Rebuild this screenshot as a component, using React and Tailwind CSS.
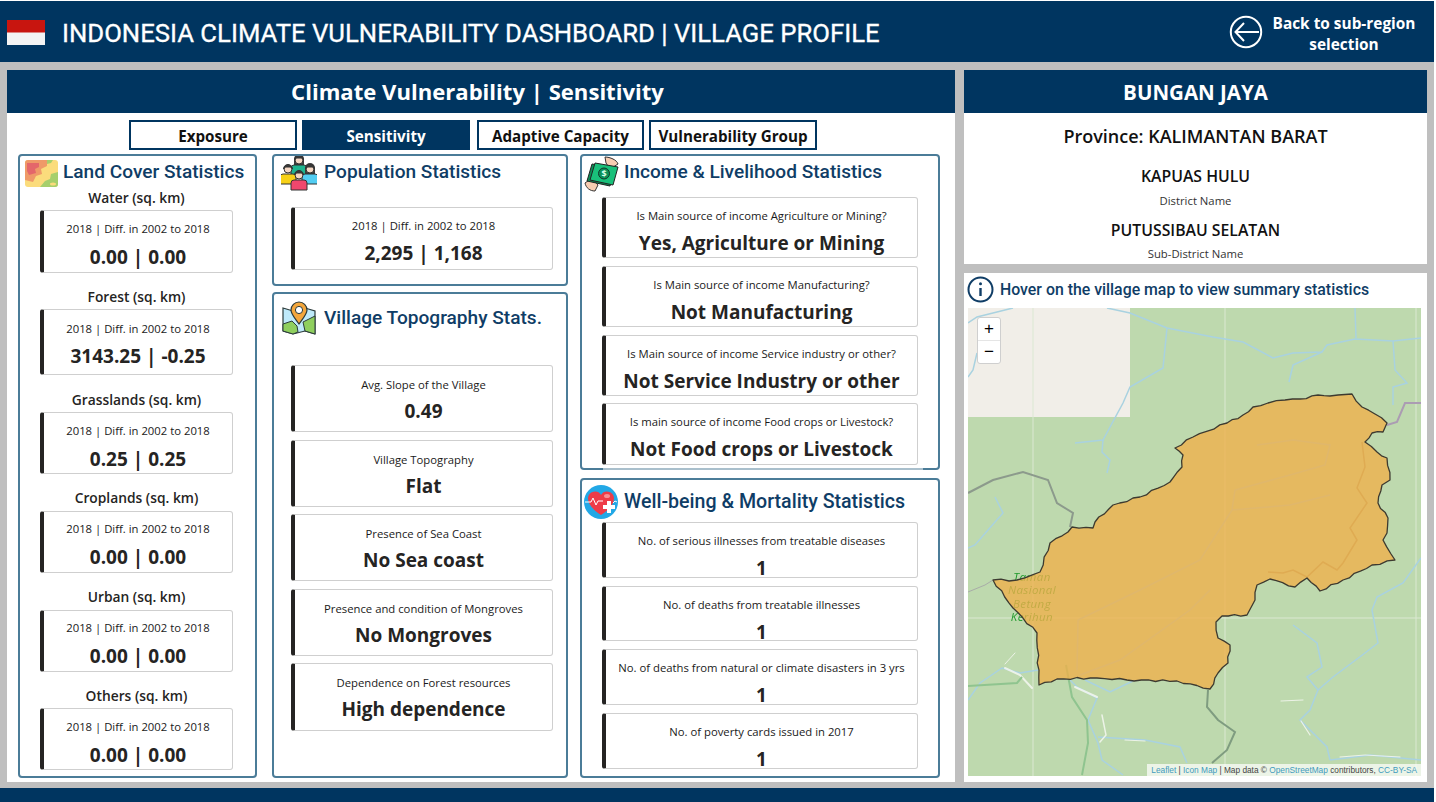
import React from "react";

const sans = "font-['Open_Sans','Noto_Sans',sans-serif]";
const din = "font-['Roboto','Noto_Sans',sans-serif]";

function Card({ h, label, value, mt = "", vsize = "text-[19px]", pt = "pt-[9px]", gap = "mt-[7px]" }) {
  return (
    <div className={`${mt} ${h} ${pt} shrink-0 rounded-[3px] border border-[#cfcfcf] border-l-[4px] border-l-[#252423] bg-white text-center`}>
      <div className="text-[11.3px] leading-[18px] text-[#1a1a1a] whitespace-nowrap">{label}</div>
      <div className={`${gap} ${vsize} font-bold leading-[26px] text-[#252423] whitespace-nowrap`}>{value}</div>
    </div>
  );
}

function Panel({ className = "", children }) {
  return <div className={`relative rounded-[4px] border-2 border-[#4b7c98] bg-white ${className}`}>{children}</div>;
}

function Heading({ icon, children, className = "", up = "", size = "text-[19.1px]" }) {
  return (
    <div className={`flex items-center ${className}`}>
      {icon}
      <span className={`${din} ${up} ${size} font-medium leading-[28px] text-[#0f3d66] whitespace-nowrap`}>{children}</span>
    </div>
  );
}

const LandIcon = () => (
  <svg width="33" height="27" viewBox="0 0 33 27" className="shrink-0">
    <rect width="33" height="27" rx="3" fill="#fbdc7c" />
    <path d="M0 3a3 3 0 0 1 3-3h19v6l-6 3 1 5-6 2-3 6-8-2z" fill="#ef9a68" />
    <path d="M2 3h12v4l-4 2 1 4-7 2-2-4z" fill="#e4676a" />
    <path d="M33 12v12a3 3 0 0 1-3 3H15l5-6 5-2 1-5z" fill="#a6cf6c" />
    <path d="M22 0h6l-2 3-4 1z" fill="#a6cf6c" />
    <ellipse cx="28" cy="24" rx="3" ry="1.5" fill="#fbdc7c" />
  </svg>
);

const Person = ({ x, y, c, long }) => (
  <g transform={`translate(${x} ${y})`}>
    {long && <path d="M-5 12V3a5 5 0 0 1 10 0v9z" fill="#3b3b3b" />}
    <path d="M-8 19v-7a3 3 0 0 1 3-3h10a3 3 0 0 1 3 3v7z" fill={c} stroke="#333" strokeWidth="1" />
    <circle cx="0" cy="4" r="4" fill="#f6d8c4" stroke="#333" strokeWidth="1" />
    <path d="M-4.5 4a4.5 4.5 0 0 1 9 0l-2-2h-5z" fill="#3b3b3b" stroke="#333" strokeWidth="1" />
  </g>
);

const PeopleIcon = () => (
  <svg width="36" height="36" viewBox="0 0 36 36" className="shrink-0">
    <Person x={18} y={0} c="#1fb58f" long />
    <Person x={7} y={9} c="#f7d117" />
    <Person x={29} y={9} c="#52cdf2" long />
    <Person x={18} y={15} c="#f0476d" />
  </svg>
);

const MapPinIcon = () => (
  <svg width="36" height="36" viewBox="0 0 36 36" className="shrink-0">
    <path d="M2 8l10 3 12-3 10 3v23l-10-3-12 3-10-3z" fill="#bfeafa" stroke="#2b3a3a" strokeWidth="1.2" />
    <path d="M2 24l9-3 5 5 1 6-5 2-10-3zM22 22l12-6v18l-10-3z" fill="#8fcf5e" stroke="#2b3a3a" strokeWidth="1" />
    <path d="M18 24c-5-7-8-10-8-14a8 8 0 0 1 16 0c0 4-3 7-8 14z" fill="#f4a63b" stroke="#2b3a3a" strokeWidth="1.2" />
    <circle cx="18" cy="10" r="3.6" fill="#fff" stroke="#2b3a3a" />
  </svg>
);

const MoneyIcon = () => (
  <svg width="36" height="36" viewBox="0 0 36 36" className="shrink-0">
    <path d="M21 1c5 0 12 3 13 7l-8 5-4-6zM1 27l7-5 6 7-3 6c-5 0-9-3-10-8z" fill="#f8cdb2" stroke="#333" />
    <path d="M8 8l23 4-5 18-23-5z" fill="#0a8f57" stroke="#222" />
    <path d="M11 7l23 4-5 18-23-5z" fill="#19c07a" stroke="#222" />
    <circle cx="20" cy="17.5" r="5.5" fill="#0a8f57" stroke="#13382a" />
    <text x="20" y="21" textAnchor="middle" fontSize="9" fontWeight="700" fill="#d7ffe8" fontFamily="Open Sans">$</text>
  </svg>
);

const HeartIcon = () => (
  <svg width="34" height="34" viewBox="0 0 34 34" className="shrink-0">
    <circle cx="17" cy="17" r="17" fill="#22a8e6" />
    <path d="M17 30C8 24 4 19 4 13a7 7 0 0 1 13-3 7 7 0 0 1 13 3c0 6-4 11-13 17z" fill="#ee3c48" />
    <ellipse cx="23" cy="11" rx="3" ry="2" fill="#f98f94" />
    <path d="M1 17h6l2-4 3 7 2-4h5" fill="none" stroke="#fff" strokeWidth="1" />
    <path d="M29 18l2-2 2 1" fill="none" stroke="#fff" strokeWidth="1" />
    <path d="M19 20h4v-4h4v4h4v4h-4v4h-4v-4h-4z" fill="#fff" />
  </svg>
);

function Tab({ w, active, children, mr }) {
  return (
    <div className={`${w} ${mr} flex h-[30px] items-center justify-center border-2 border-[#003560] pt-[2px] text-[15.2px] font-bold ${active ? "bg-[#003560] text-white" : "bg-white text-[#111]"}`}>
      {children}
    </div>
  );
}

const land = [
  ["Water (sq. km)", "0.00 | 0.00", "h-[63px]", "mt-0", "h-[22px]", "pt-[9px]", "mt-[6px]"],
  ["Forest (sq. km)", "3143.25 | -0.25", "h-[66px]", "mt-[14px]", "h-[22px]", "pt-[10px]", "mt-[5px]"],
  ["Grasslands (sq. km)", "0.25 | 0.25", "h-[62px]", "mt-[15px]", "h-[22px]", "pt-[9px]", "mt-[6px]"],
  ["Croplands (sq. km)", "0.00 | 0.00", "h-[62px]", "mt-[14px]", "h-[23px]", "pt-[8px]", "mt-[6px]"],
  ["Urban (sq. km)", "0.00 | 0.00", "h-[62px]", "mt-[14px]", "h-[23px]", "pt-[8px]", "mt-[6px]"],
  ["Others (sq. km)", "0.00 | 0.00", "h-[62px]", "mt-[14px]", "h-[22px]", "pt-[9px]", "mt-[6px]"],
];

const topo = [
  ["Avg. Slope of the Village", "0.49", "h-[67px]", "mt-0"],
  ["Village Topography", "Flat", "h-[67px]", "mt-[8px]"],
  ["Presence of Sea Coast", "No Sea coast", "h-[67px]", "mt-[7px]"],
  ["Presence and condition of Mongroves", "No Mongroves", "h-[67px]", "mt-[8px]"],
  ["Dependence on Forest resources", "High dependence", "h-[68px]", "mt-[7px]"],
];

const income = [
  ["Is Main source of income Agriculture or Mining?", "Yes, Agriculture or Mining", "h-[61px]", "mt-0"],
  ["Is Main source of income Manufacturing?", "Not Manufacturing", "h-[61px]", "mt-[8px]"],
  ["Is Main source of income Service industry or other?", "Not Service Industry or other", "h-[61px]", "mt-[8px]"],
  ["Is main source of income Food crops or Livestock?", "Not Food crops or Livestock", "h-[62px]", "mt-[7px]"],
];

const well = [
  ["No. of serious illnesses from treatable diseases", "h-[56px]", "mt-0"],
  ["No. of deaths from treatable illnesses", "h-[55px]", "mt-[8px]"],
  ["No. of deaths from natural or climate disasters in 3 yrs", "h-[56px]", "mt-[8px]"],
  ["No. of poverty cards issued in 2017", "h-[56px]", "mt-[8px]"],
];

const polyBase = [
  [1253,407],[1268,403],[1285,400],[1300,399],[1318,395],[1330,396],[1338,395],[1352,394],[1362,407],[1375,414],[1387,423],[1383,432],[1372,433],[1365,442],[1377,452],[1387,458],[1390,480],[1382,485],[1378,503],[1388,518],[1387,533],[1383,540],[1395,560],[1372,565],[1343,580],[1320,591],[1307,578],[1295,587],[1270,579],[1257,585],[1255,600],[1247,615],[1222,616],[1216,622],[1218,638],[1230,645],[1228,663],[1218,673],[1210,689],[1177,681],[1127,680],[1097,678],[1057,679],[1039,685],[1037,633],[1013,608],[993,580],[1017,580],[1040,572],[1050,543],[1068,532],[1072,527],[1093,528],[1095,522],[1113,505],[1140,497],[1170,482],[1182,467],[1183,455],[1175,448],[1193,437],[1227,423],[1243,415],
];

// a slightly rough outline, as a traced boundary has
function roughen(pts) {
  const out = [];
  pts.forEach((p, i) => {
    const q = pts[(i + 1) % pts.length];
    const dx = q[0] - p[0];
    const dy = q[1] - p[1];
    const len = Math.hypot(dx, dy);
    const n = Math.max(1, Math.round(len / 7));
    out.push(p.join(","));
    for (let k = 1; k < n; k++) {
      const off = Math.sin(k * 2.4 + i * 1.7) * 1;
      const x = p[0] + (dx * k) / n - (dy / len) * off;
      const y = p[1] + (dy * k) / n + (dx / len) * off;
      out.push(`${x.toFixed(1)},${y.toFixed(1)}`);
    }
  });
  return out.join(" ");
}
const poly = roughen(polyBase);

function MapArt() {
  const river = "fill-none stroke-[#a9d2e0] stroke-[1.5]";
  return (
    <svg viewBox="968 308 453 468" className="absolute inset-0 h-full w-full blur-[0.35px]">
      <rect x="968" y="308" width="453" height="468" fill="#bed9ae" />
      <rect x="968" y="308" width="162" height="109" fill="#f1eee8" />
      <g stroke="#dbe8d2" strokeWidth="1">
        <path d="M1033 308V776M1225 308V776M1416 308V776M968 618H1421" />
      </g>
      <g className={river}>
        <polyline points="1107,308 1130,313 1167,328 1213,337 1243,342 1273,358 1293,353 1322,352 1327,345 1355,339 1393,341 1421,338" />
        <polyline points="1167,328 1165,348 1163,368 1130,387 1123,403 1103,440 1075,443" />
        <polyline points="1103,440 1102,452 1110,460 1107,473" />
        <polyline points="1355,308 1356,338" />
        <polyline points="1393,341 1395,370 1407,383 1393,387 1393,405" />
        <polyline points="1322,352 1293,365 1289,382" />
        <polyline points="968,323 977,317 997,312 1013,308" />
        <polyline points="977,353 973,370 968,377" />
        <polyline points="995,497 1003,513 988,530 975,545 968,548" />
        <polyline points="1293,625 1317,643 1322,667 1307,677 1318,690 1310,710 1300,720 1327,747 1330,760" />
        <polyline points="1318,690 1333,677 1365,653 1378,643 1372,610 1377,597 1403,583 1421,558" />
        <polyline points="1070,680 1077,687 1097,698 1088,720 1098,743 1102,760 1123,775" />
        <polyline points="1098,737 1145,740 1180,747 1187,763" />
        <polyline points="968,700 980,683 1002,668 1020,673 1038,670" />
        <polyline points="1330,760 1370,755 1421,760" />
        <polyline points="1085,680 1110,692 1135,680" />
        <polyline points="1257,445 1293,440 1330,445 1325,465 1290,475 1235,490 1232,510 1290,505 1330,495" />
        <polyline points="1232,510 1200,560 1140,590 1078,620 1077,670" />
        <polyline points="1210,590 1190,610 1120,660 1080,675" />
      </g>
      <g fill="none" stroke="#f4f7f1" strokeLinecap="round" strokeOpacity="0.85">
        <polyline points="1005,668 1020,675 1032,688" strokeWidth="2" />
        <polyline points="1075,687 1097,697" strokeWidth="2" />
        <polyline points="1015,653 1005,664" strokeWidth="1" />
        <polyline points="1102,715 1106,735 1100,742" strokeWidth="1.5" />
        <polyline points="1125,740 1145,741" strokeWidth="1.2" />
        <polyline points="1281,701 1303,700" strokeWidth="1" />
        <polyline points="1301,721 1310,735" strokeWidth="1.2" />
        <polyline points="1340,757 1365,755 1400,757" strokeWidth="1" />
      </g>
      <g fill="none" strokeWidth="2">
        <polyline points="968,493 993,480 1023,472 1048,480 1057,503 1073,513 1070,527" stroke="#8c9a8c" />
        <polyline points="1387,425 1397,422 1405,403 1421,403" stroke="#ab9cb3" />
        <polyline points="1208,690 1207,707 1218,720 1235,732 1227,750 1212,763" stroke="#7f9c80" />
        <polyline points="968,686 1017,683 1022,677" stroke="#8fc48f" />
        <polyline points="1066,665 1072,697 1087,720 1088,743 1082,775" stroke="#8fc48f" />
        <polyline points="968,592 985,585 993,580" stroke="#a8aca8" strokeWidth="1" />
        <polyline points="1362,442 1365,467 1357,488 1367,503 1350,528 1357,540 1343,563 1337,570 1323,562 1307,577 1293,570 1283,573 1268,572" stroke="#a39a6d" strokeWidth="1.5" />
      </g>
      <g fontFamily="Open Sans" fontStyle="italic" fontSize="11.5" fill="#1f9a2c" textAnchor="middle" letterSpacing="0.4">
        <text x="1032" y="581">Taman</text>
        <text x="1032" y="594">Nasional</text>
        <text x="1032" y="608">Betung</text>
        <text x="1032" y="621">Kerihun</text>
      </g>
      <polygon points={poly} fill="#f0b04a" fillOpacity="0.78" stroke="#3d3a30" strokeWidth="1.3" strokeLinejoin="round" />
    </svg>
  );
}

export default function App() {
  return (
    <div className={`h-[802px] w-[1436px] overflow-hidden bg-white pt-px ${sans}`}>
      <div className="flex h-[801px] w-[1434px] flex-col bg-[#bfbfbf]">
        <header className="flex h-[61px] shrink-0 items-center bg-[#003560] pl-[7px] text-white">
          <div className="mt-[1px] h-[25px] w-[38px] shrink-0 bg-[linear-gradient(#c8150f_0,#c8150f_48%,#f3f3f3_52%,#f3f3f3_100%)] blur-[0.4px]" />
          <h1 className={`${din} ml-[17px] mt-[5px] text-[25.7px] font-normal leading-none whitespace-nowrap [-webkit-text-stroke:0.3px_white]`}>
            INDONESIA CLIMATE VULNERABILITY DASHBOARD | VILLAGE PROFILE
          </h1>
          <div className="ml-auto mr-[17px] flex items-center">
            <svg width="34" height="34" viewBox="0 0 34 34" className="shrink-0" fill="none" stroke="#fff" strokeWidth="2">
              <circle cx="17" cy="17" r="15.2" />
              <path d="M30 17H7M15 8l-8.5 9 8.5 9" />
            </svg>
            <div className="ml-[8px] mt-[5px] w-[146px] text-center text-[15.4px] font-bold leading-[21.5px]">
              Back to sub-region selection
            </div>
          </div>
        </header>

        <div className="flex h-[712px] shrink-0 gap-[9px] pl-[7px] pt-0 mt-[8px]">
          <main className="w-[948px] shrink-0 bg-white">
            <div className="flex h-[43px] items-center justify-center bg-[#003560] pr-[7px] text-[22.1px] font-bold text-white">
              Climate Vulnerability | Sensitivity
            </div>
            <div className="mt-[7px] flex pl-[122px]">
              <Tab w="w-[168px]" mr="mr-[5px]">Exposure</Tab>
              <Tab w="w-[168px]" mr="mr-[7px]" active>Sensitivity</Tab>
              <Tab w="w-[167px]" mr="mr-[5px]">Adaptive Capacity</Tab>
              <Tab w="w-[168px]">Vulnerability Group</Tab>
            </div>
            <div className="mt-[4px] flex h-[624px] pl-[11px]">
              <Panel className="h-full w-[239px] shrink-0 pl-[20px] pr-[22px] pt-[2px]">
                <Heading up="mb-[2px]" icon={<div className="-ml-[15px] mr-[5px]"><LandIcon /></div>} className="h-[30px] whitespace-nowrap">Land Cover Statistics</Heading>
                {land.map(([l, v, h, mt, lh, pt, gap]) => (
                  <div key={l} className={mt}>
                    <div className={`${lh} text-center text-[13.8px] font-semibold leading-[20px] text-[#252423] whitespace-nowrap`}>{l}</div>
                    <Card h={h} label="2018 | Diff. in 2002 to 2018" value={v} pt={pt} gap={gap} />
                  </div>
                ))}
              </Panel>

              <div className="ml-[15px] flex w-[296px] shrink-0 flex-col">
                <Panel className="h-[132px] pl-[17px] pr-[13px] pt-[1px]">
                  <Heading up="mb-[4px]" icon={<div className="-ml-[10px] mr-[7px]"><PeopleIcon /></div>} className="h-[34px]">Population Statistics</Heading>
                  <Card mt="mt-[16px]" h="h-[63px]" label="2018 | Diff. in 2002 to 2018" value="2,295 | 1,168" pt="pt-[9px]" gap="mt-[5px]" />
                </Panel>
                <Panel className="mt-[6px] h-[486px] pl-[17px] pr-[13px] pt-[6px]">
                  <Heading icon={<div className="-ml-[10px] mr-[7px]"><MapPinIcon /></div>} className="h-[36px]">
                    Village Topography Stats.
                  </Heading>
                  <div className="mt-[29px]">
                    {topo.map(([l, v, h, mt]) => (
                      <Card key={l} mt={mt} h={h} label={l} value={v} pt="pt-[10px]" gap="mt-[4px]" />
                    ))}
                  </div>
                </Panel>
              </div>

              <div className="ml-[12px] flex w-[360px] shrink-0 flex-col">
                <Panel className="h-[316px] px-[20px] pt-[1px]">
                  <Heading up="mb-[4px]" icon={<div className="-ml-[18px] mr-[4px]"><MoneyIcon /></div>} className="h-[34px]">Income &amp; Livelihood Statistics</Heading>
                  <div className="mt-[6px]">
                    {income.map(([l, v, h, mt]) => (
                      <Card key={l} mt={mt} h={h} label={l} value={v} pt="pt-[9px]" gap="mt-[5px]" />
                    ))}
                  </div>
                  <div className="absolute -bottom-[2px] left-[21px] right-[15px] h-[2px] bg-[#a9bfcc]" />
                </Panel>
                <Panel className="mt-[8px] h-[300px] px-[20px] pt-[5px]">
                  <Heading size="text-[19.6px]" icon={<div className="-ml-[18px] mr-[6px]"><HeartIcon /></div>} className="h-[34px]">Well‑being &amp; Mortality Statistics</Heading>
                  <div className="mt-[3px]">
                    {well.map(([l, h, mt]) => (
                      <Card key={l} mt={mt} h={h} label={l} value="1" pt="pt-[9px]" gap="mt-[5px]" />
                    ))}
                  </div>
                </Panel>
              </div>
            </div>
          </main>

          <aside className="flex w-[463px] shrink-0 flex-col">
            <div className="h-[194px] shrink-0 bg-white text-center">
              <div className="flex h-[43px] items-center justify-center bg-[#003560] pt-[2px] text-[20.5px] font-bold text-white">BUNGAN JAYA</div>
              <div className="mt-[11px] text-[18px] font-semibold leading-[24px] text-[#111]">Province: KALIMANTAN BARAT</div>
              <div className="mt-[17px] text-[15.8px] font-semibold leading-[22px] text-[#111]">KAPUAS HULU</div>
              <div className="mt-[6px] text-[11.3px] leading-[16px] text-[#333]">District Name</div>
              <div className="mt-[10px] text-[15.8px] font-semibold leading-[22px] text-[#111]">PUTUSSIBAU SELATAN</div>
              <div className="mt-[5px] text-[11.3px] leading-[16px] text-[#333]">Sub-District Name</div>
            </div>
            <div className="mt-[9px] h-[509px] shrink-0 bg-white px-[4px]">
              <div className="flex h-[33px] items-center mb-[2px]">
                <svg width="27" height="27" viewBox="0 0 27 27" className="-ml-[1px] shrink-0" fill="none" stroke="#0f3d66" strokeWidth="2">
                  <circle cx="13.5" cy="13.5" r="12" />
                  <path d="M13.5 12v8" strokeWidth="2.4" />
                  <circle cx="13.5" cy="7.7" r="1.5" fill="#0f3d66" stroke="none" />
                </svg>
                <span className={`${din} ml-[6px] text-[15.85px] font-medium text-[#0f3d66] whitespace-nowrap`}>
                  Hover on the village map to view summary statistics
                </span>
              </div>
              <div className="relative h-[468px] w-[453px] overflow-hidden">
                <MapArt />
                <div className="absolute left-[9px] top-[9px] w-[24px] rounded-[3px] border border-[#cfcfcf] bg-white text-center font-['Liberation_Sans',sans-serif] text-[17px] leading-[22px] text-black">
                  <div className="border-b border-[#e5e5e5]">+</div>
                  <div>−</div>
                </div>
                <div className="absolute bottom-0 right-0 whitespace-nowrap bg-white/70 px-[4px] font-['Liberation_Sans',sans-serif] text-[8.3px] leading-[12px] text-[#444]">
                  <span className="text-[#3f9bbd]">Leaflet</span> | <span className="text-[#3f9bbd]">Icon Map</span> | Map data © <span className="text-[#3f9bbd]">OpenStreetMap</span> contributors, <span className="text-[#3f9bbd]">CC-BY-SA</span>
                </div>
              </div>
            </div>
          </aside>
        </div>

        <footer className="mt-[6px] h-[14px] shrink-0 bg-[#003560]" />
      </div>
    </div>
  );
}
